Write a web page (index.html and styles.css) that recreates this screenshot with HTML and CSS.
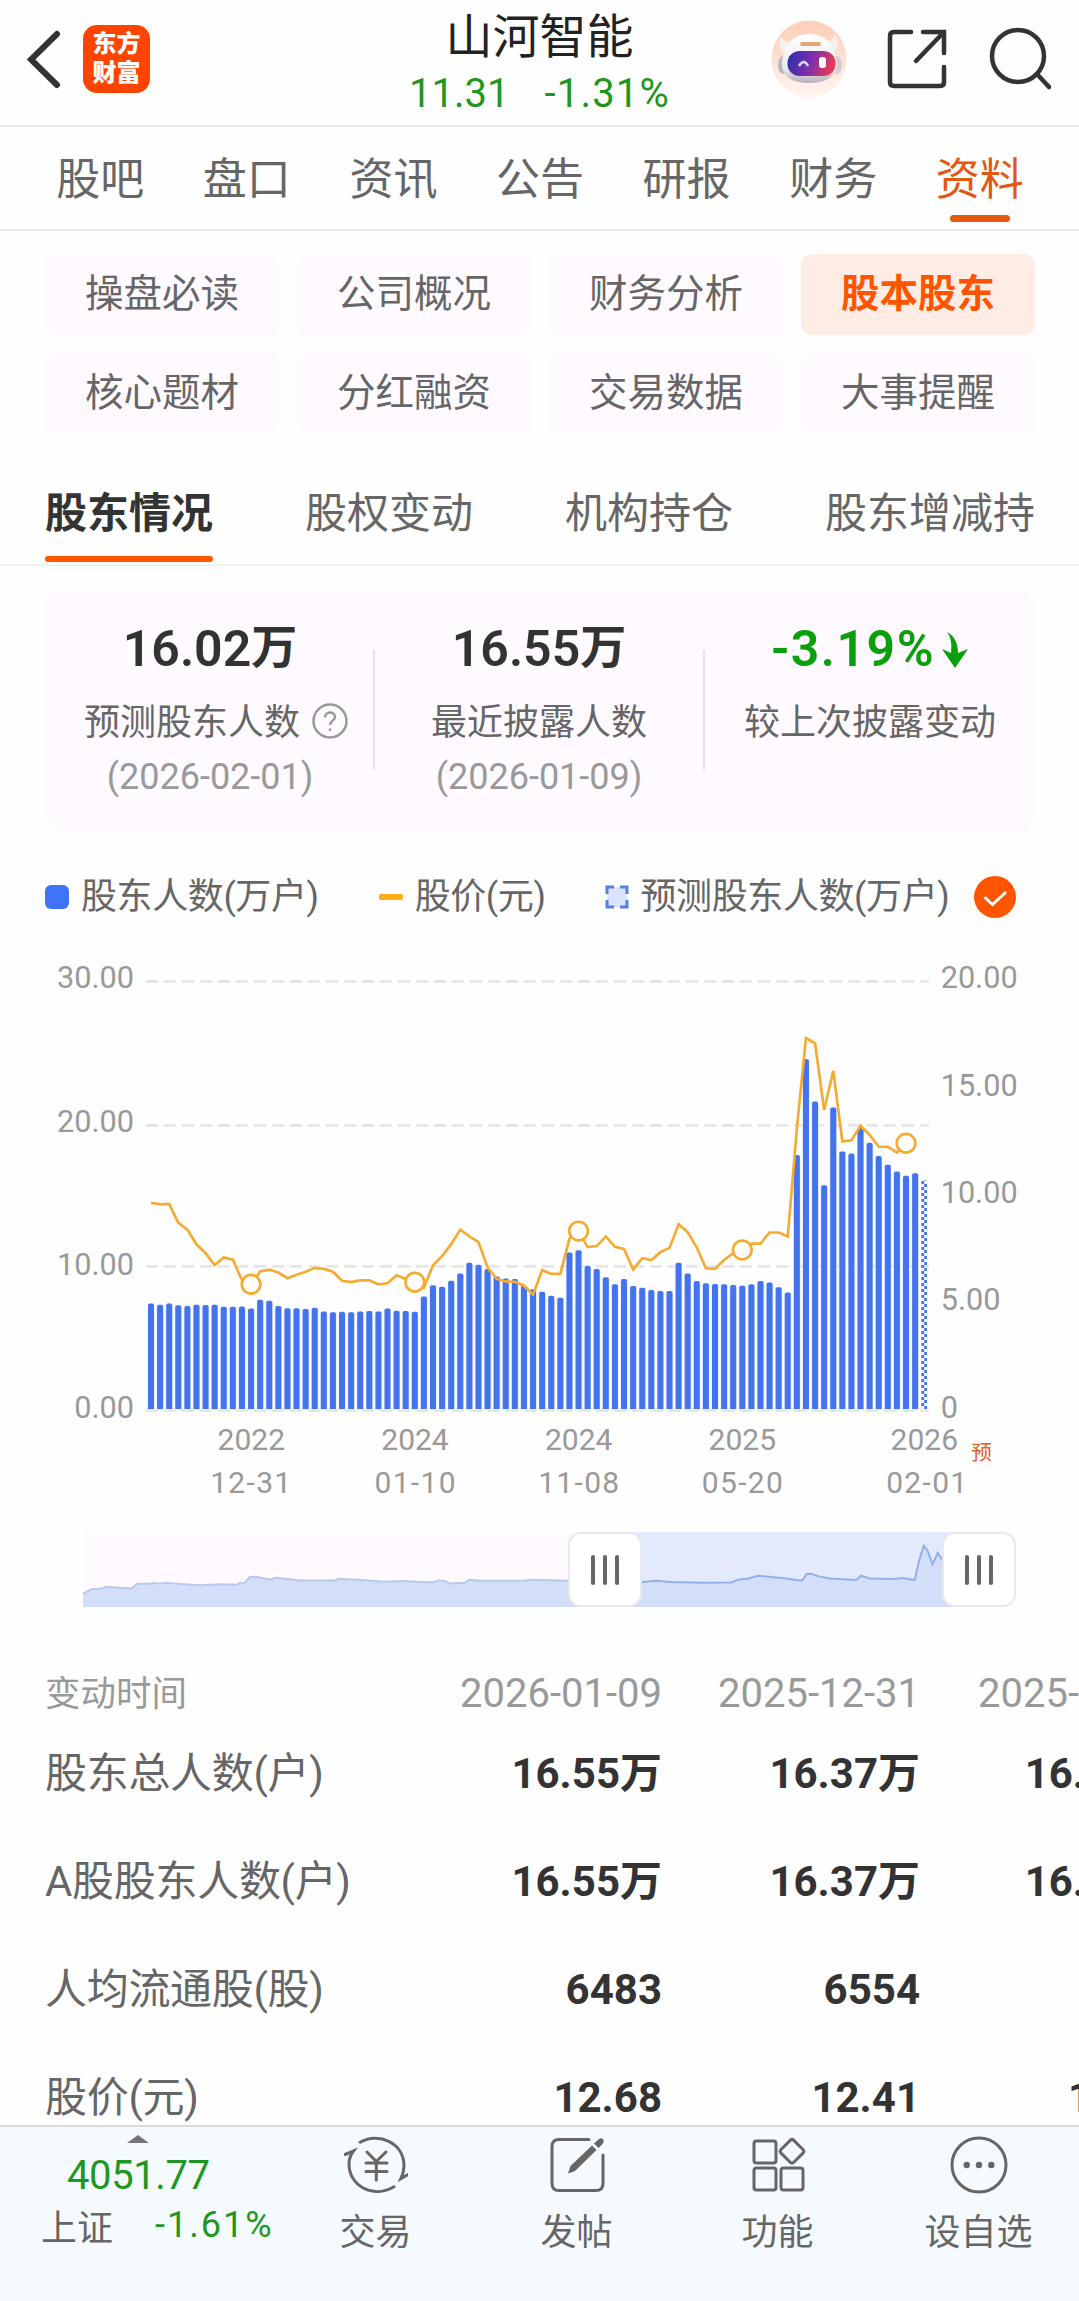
FILE: index.html
```html
<!DOCTYPE html>
<html lang="zh-CN">
<head>
  <meta charset="UTF-8" />
  <meta name="viewport" content="width=device-width, initial-scale=1.0"/>
  <title>山河智能 - 股本股东</title>
  <link rel="stylesheet" href="styles.css">
</head>
<body>
  <header class="header">
    <div class="header-left">
      <svg class="back" viewBox="0 0 36 60"><path d="M32 5L6 30.500L32 56"/></svg>
      <div class="logo">东方<br>财富</div>
    </div>
    <div class="header-title">
      <h1>山河智能</h1>
      <div class="quote"><span>11.31</span><span class="rate">-1.31%</span></div>
    </div>
    <div class="header-right">
      <svg class="robot" viewBox="0 0 76 78">
        <defs>
          <linearGradient id="robotBg" x1="0" y1="0" x2="0" y2="1"><stop offset="0" stop-color="#ffcdb5"/><stop offset="1" stop-color="#fff5f1"/></linearGradient>
          <linearGradient id="robotFace" x1="0" y1="0" x2="1" y2="0.200"><stop offset="0" stop-color="#2a2fa8"/><stop offset="0.550" stop-color="#7b2fae"/><stop offset="1" stop-color="#e23a5c"/></linearGradient>
          <linearGradient id="robotHead" x1="0" y1="0" x2="0" y2="1"><stop offset="0" stop-color="#ffffff"/><stop offset="0.700" stop-color="#eeeaec"/><stop offset="1" stop-color="#b5b2ba"/></linearGradient>
        </defs>
        <ellipse cx="38" cy="39" rx="37.500" ry="38.500" fill="url(#robotBg)"/>
        <path d="M10 17Q6 27 14 33L24 22Q14 23 10 17ZM65 14Q70 26 62 33L52 21Q63 21 65 14Z" fill="#f6efef"/>
        <ellipse cx="12" cy="45" rx="5" ry="9" fill="#b9b7c0"/>
        <ellipse cx="66" cy="45" rx="5" ry="9" fill="#d5cdd2"/>
        <path d="M38 14C54 14 64 25 66 44C66 58 52 63 38 63C23 63 11 58 11 44C12 25 22 14 38 14Z" fill="url(#robotHead)"/>
        <rect x="29" y="22" width="21" height="4" rx="2" fill="#dfa878"/>
        <rect x="16.500" y="31" width="48" height="25" rx="12" fill="url(#robotFace)"/>
        <path d="M28 46Q33 38 37 46" fill="none" stroke="#dcd8ff" stroke-width="2.500"/>
        <rect x="48" y="37" width="7" height="11" rx="3" fill="#fff"/>
      </svg>
      <svg class="share" viewBox="0 0 60 60"><path d="M24 3H7Q3 3 3 7V53Q3 57 7 57H53Q57 57 57 53V38M36 3H57V24M56 4L29 32"/></svg>
      <svg class="search" viewBox="0 0 64 64"><circle cx="29" cy="29" r="26"/><path d="M48 47L60 60"/></svg>
    </div>
  </header>

  <nav class="tabs">
    <span>股吧</span><span>盘口</span><span>资讯</span><span>公告</span><span>研报</span><span>财务</span><span class="active">资料</span>
  </nav>

  <div class="menu">
    <span>操盘必读</span><span>公司概况</span><span>财务分析</span><span class="active">股本股东</span>
    <span>核心题材</span><span>分红融资</span><span>交易数据</span><span>大事提醒</span>
  </div>

  <nav class="subtabs">
    <span class="active">股东情况</span><span>股权变动</span><span>机构持仓</span><span>股东增减持</span>
  </nav>

  <section class="summary">
    <div class="summary-item">
      <div class="num">16.02<b>万</b></div>
      <div class="label with-help">预测股东人数
        <svg class="help" viewBox="0 0 36 36"><circle cx="18" cy="18" r="16.500"/><path d="M13 14.500C13 8 23 8 23 14C23 18 18 17.500 18 22M18 25.500V28"/></svg>
      </div>
      <div class="date">(2026-02-01)</div>
    </div>
    <div class="summary-item">
      <div class="num">16.55<b>万</b></div>
      <div class="label">最近披露人数</div>
      <div class="date">(2026-01-09)</div>
    </div>
    <div class="summary-item">
      <div class="num down">-3.19%
        <svg class="arrow" viewBox="0 0 28 38"><path d="M6 1C14 5 17 13 17 22L27 18L14 37L1 18L10 22C11 13 10 6 6 1Z"/></svg>
      </div>
      <div class="label">较上次披露变动</div>
    </div>
  </section>

  <div class="legend">
    <i class="mark-bar"></i><span>股东人数(万户)</span>
    <i class="mark-line"></i><span>股价(元)</span>
    <svg class="mark-pre" viewBox="0 0 24 24"><rect x="2" y="2" width="20" height="20"/><path d="M9 2H2V9M15 2H22V9M22 15V22H15M9 22H2V15"/></svg><span>预测股东人数(万户)</span>
    <svg class="check" viewBox="0 0 42 42"><circle cx="21" cy="21" r="21"/><path d="M10.500 21L18.500 28.500L32 16"/></svg>
  </div>

  <svg class="chart" viewBox="-120 3 3237 1650">
    <defs>
      <pattern id="checker" width="18" height="18" patternUnits="userSpaceOnUse" x="2643.600">
        <rect x="9" width="9" height="9" fill="#4374ee"/><rect y="9" width="9" height="9" fill="#4374ee"/>
      </pattern>
    </defs>
    <g class="grid">
      <path d="M318 94H2667"/><path d="M318 526H2667"/><path d="M318 949H2667"/><path d="M318 1382H2667"/>
    </g>
    <g id="bars"></g>
    <polyline id="priceLine"/>
    <g id="dots"></g>
    <g class="axis axis-left">
      <text x="282" y="115">30.00</text><text x="282" y="545">20.00</text><text x="282" y="974">10.00</text><text x="282" y="1403">0.00</text>
    </g>
    <g class="axis">
      <text x="2702" y="115">20.00</text><text x="2702" y="439">15.00</text><text x="2702" y="760">10.00</text><text x="2702" y="1081">5.00</text><text x="2702" y="1403">0</text>
    </g>
    <g class="axis axis-x">
      <text x="634" y="1501">2022</text><text class="day" x="634" y="1628">12-31</text>
      <text x="1125" y="1501">2024</text><text class="day" x="1127" y="1628">01-10</text>
      <text x="1616" y="1501">2024</text><text class="day" x="1618" y="1628">11-08</text>
      <text x="2107" y="1501">2025</text><text class="day" x="2109" y="1628">05-20</text>
      <text x="2653" y="1501">2026</text><text class="day" x="2662" y="1628">02-01</text>
    </g>
    <text class="pre-tag" x="2794" y="1530">预</text>
  </svg>

  <div class="slider">
    <svg class="slider-area" viewBox="65 97 1408 223" preserveAspectRatio="none">
      <rect class="range" x="853" y="97" width="565" height="223"/>
      <path class="fill" d="M65 280L78 267L92 266L100 260L138 265L147 251L240 255L297 254L301 249L309 248L317 231L325 230L347 238L357 233L393 241L445 241L451 236L520 245L593 247L601 241L620 250L641 248L648 239L665 242L732 242L738 239L798 242L853 245L910 246L930 242L952 246L1000 248L1043 247L1055 238L1068 236L1084 227L1120 234L1150 242L1157 222L1164 221L1175 229L1192 235L1232 240L1239 227L1252 235L1287 237L1302 234L1320 240L1327 180L1334 137L1340 155L1347 193L1355 159L1362 182L1390 190L1418 200V320H65Z"/>
      <polyline class="line" points="65,280 78,267 92,266 100,260 138,265 147,251 165,251 172,249 180,251 190,249 240,255 275,252 297,254 301,249 309,248 317,231 325,230 347,238 357,233 393,241 445,241 451,236 480,239 520,245 545,243 593,247 601,241 610,243 620,250 641,248 648,239 665,242 732,242 738,239 798,242 853,245"/>
      <polyline class="line strong" points="853,245 910,246 930,242 952,246 1000,248 1043,247 1055,238 1068,236 1084,227 1100,230 1120,234 1150,242 1157,222 1164,221 1175,229 1192,235 1232,240 1239,227 1252,235 1287,237 1302,234 1320,240 1327,180 1334,137 1340,155 1347,193 1355,159 1362,182"/>
    </svg>
    <div class="handle handle-start"><i></i><i></i><i></i></div>
    <div class="handle handle-end"><i></i><i></i><i></i></div>
  </div>

  <section class="table">
    <div class="row head"><span class="name">变动时间</span><span>2026-01-09</span><span>2025-12-31</span><span>2025-</span></div>
    <div class="row"><span class="name">股东总人数(户)</span><span>16.55万</span><span>16.37万</span><span class="cut-short">16.</span></div>
    <div class="row"><span class="name">A股股东人数(户)</span><span>16.55万</span><span>16.37万</span><span class="cut-short">16.</span></div>
    <div class="row"><span class="name">人均流通股(股)</span><span>6483</span><span>6554</span><span></span></div>
    <div class="row"><span class="name">股价(元)</span><span>12.68</span><span>12.41</span><span class="cut">1</span></div>
  </section>

  <footer class="bottom">
    <div class="index">
      <svg class="up" viewBox="0 0 22 8"><path d="M0 8L11 0L22 8Z"/></svg>
      <div class="index-value">4051.77</div>
      <div class="index-row"><span>上证</span><span class="index-rate">-1.61%</span></div>
    </div>
    <div class="action">
      <svg viewBox="0 0 64 64"><path d="M16.200 9.300C34 -1 60 9 60 33Q60 39 57 45.500L64 41.500M50 53.700C29 66 5 53 5 31Q5 24 9.500 18L1 21.500"/><path d="M23 19L32.300 28.500L42 19M32.300 28.500V47M22 30H43M22 38.500H43"/></svg>
      <span>交易</span>
    </div>
    <div class="action">
      <svg viewBox="0 0 64 64"><path d="M44 6.500H14Q7 6.500 7 13.500V50.500Q7 57.500 14 57.500H51Q58 57.500 58 50.500V22"/><path class="solid" d="M23 40.500L25.500 33L47 12.500L51.500 17L30 38ZM49 10.500L54 6Q56 4.500 58 6Q59.500 8 58 10.500L53.500 15Z"/></svg>
      <span>发帖</span>
    </div>
    <div class="action">
      <svg viewBox="0 0 64 64"><rect x="8" y="8" width="22" height="22" rx="2.500"/><rect x="8" y="35" width="22" height="22" rx="2.500"/><rect x="35" y="35" width="22" height="22" rx="2.500"/><rect x="37" y="9.300" width="18" height="18" rx="2.500" transform="rotate(45 46 18.300)"/></svg>
      <span>功能</span>
    </div>
    <div class="action">
      <svg viewBox="0 0 64 64"><circle cx="32" cy="32" r="27"/><g class="solid"><circle cx="19.700" cy="32" r="3.200"/><circle cx="32" cy="32" r="3.200"/><circle cx="44.300" cy="32" r="3.200"/></g></svg>
      <span>设自选</span>
    </div>
  </footer>

<script>
// distance from the top of the chart for each bar and price point
const barTops = [
  990, 993, 990, 995, 997, 993, 994, 993, 999, 999, 998, 1004, 979, 982, 997, 1003, 1003, 1005, 1002, 1012,
  1014, 1013, 1014, 1012, 1011, 1012, 1004, 1010, 1011, 1013, 970, 939, 943, 926, 906, 876, 881, 893, 914, 920,
  921, 940, 950, 957, 968, 974, 847, 841, 885, 893, 916, 936, 921, 941, 946, 952, 955, 955, 876, 906,
  927, 933, 935, 936, 938, 940, 936, 927, 931, 944, 959, 574, 306, 424, 659, 441, 564, 570, 498, 540,
  577, 601, 620, 632, 625, 645
];
const prices = [
  708, 712, 711, 764, 783, 824, 849, 882, 861, 867, 925, 936, 900, 895, 903, 919, 909, 901, 890, 893,
  901, 926, 930, 925, 925, 936, 933, 911, 921, 930, 945, 883, 857, 823, 783, 802, 818, 889, 921, 928,
  929, 940, 965, 896, 907, 907, 808, 787, 832, 829, 802, 831, 837, 895, 863, 868, 846, 834, 768, 790,
  833, 891, 893, 868, 849, 840, 822, 822, 791, 791, 802, 500, 247, 261, 448, 338, 536, 533, 492, 518,
  551, 551, 567, 541
];
const marked = [11, 29, 47, 65, 83];
const baseY = 1377;
const px = i => 333 + i * 27.29;
const py = v => v * 15 / 14;

document.getElementById("bars").innerHTML = barTops.map((v, i) => {
  const x = px(i);
  const y = py(v);
  const last = i === barTops.length - 1;
  const halo = last ? "" : `<rect x="${x - 11}" y="${y}" width="22" height="${baseY - y + 4}" fill="#e4ecfd"/>`;
  return halo +
    `<path d="M${x - 9} ${baseY}V${y + 6}q0 -6 6 -6h6q6 0 6 6V${baseY}Z" fill="${last ? "url(#checker)" : "#4374ee"}"/>`;
}).join("");

document.getElementById("priceLine").setAttribute("points", prices.map((v, i) => `${px(i)},${py(v)}`).join(" "));
document.getElementById("dots").innerHTML = marked.map(i => `<circle cx="${px(i)}" cy="${py(prices[i])}" r="28"/>`).join("");
</script>
</body>
</html>
```

FILE: styles.css
```css
* {
  box-sizing: border-box;
}

body {
  margin: 0;
  width: 1079px;
  height: 2301px;
  overflow: hidden;
  display: flex;
  flex-direction: column;
  background: #fefefe;
  color: #666;
  font-family: Roboto, "Noto Sans CJK SC", sans-serif;
}

svg {
  display: block;
  flex: none;
}

/* header */
.header {
  height: 127px;
  flex: none;
  display: grid;
  grid-template-columns: 1fr auto 1fr;
  border-bottom: 2px solid #eaeaea;
}

.header-left,
.header-right {
  display: flex;
  align-items: center;
  height: 118px;
}

.header-left {
  padding-left: 25px;
}

.back {
  width: 36px;
  height: 60px;
  fill: none;
  stroke: #333;
  stroke-width: 6;
  stroke-linecap: round;
}

.logo {
  margin-left: 22px;
  width: 67px;
  height: 68px;
  padding-top: 5px;
  border-radius: 14px;
  background: #ff4400;
  color: #fff;
  font-size: 24px;
  line-height: 29px;
  font-weight: 900;
  text-align: center;
}

.header-title {
  padding-top: 2px;
  text-align: center;
}

h1 {
  margin: 0;
  font-size: 47px;
  line-height: 70px;
  font-weight: 400;
  color: #222;
}

.quote {
  display: flex;
  justify-content: center;
  gap: 35px;
  font-size: 40px;
  line-height: 43px;
  color: #1f961f;
}

.quote .rate {
  letter-spacing: 1.2px;
}

.header-right {
  justify-content: flex-end;
  padding-right: 26px;
}

.robot {
  width: 76px;
  height: 78px;
}

.share {
  width: 60px;
  height: 60px;
  margin: 0 42px 0 40px;
}

.search {
  width: 64px;
  height: 64px;
}

.share,
.search {
  fill: none;
  stroke: #333;
  stroke-width: 4.5;
  stroke-linecap: round;
}

/* tabs */
.tabs {
  height: 104px;
  flex: none;
  display: flex;
  padding: 0 26px 0 27px;
  border-bottom: 2px solid #eaeaea;
  font-size: 44px;
  line-height: 106px;
}

.tabs span {
  flex: 1;
  text-align: center;
}

.tabs .active {
  color: #e5560f;
  display: flex;
  flex-direction: column;
  align-items: center;
}

.tabs .active::after {
  content: "";
  width: 60px;
  height: 7px;
  margin-top: -18px;
  border-radius: 4px;
  background: #e5560f;
}

.menu {
  display: grid;
  flex: none;
  grid-template-columns: repeat(4, 1fr);
  gap: 18px;
  padding: 23px 44px 0 45px;
  font-size: 38.5px;
  line-height: 80px;
  text-align: center;
}

.menu span {
  height: 81px;
  border-radius: 11px;
  background: #fefaff;
}

.menu .active {
  background: #ffede5;
  color: #ff5500;
  font-weight: 700;
}

.subtabs {
  height: 132px;
  flex: none;
  display: flex;
  justify-content: space-between;
  padding: 34px 44px 1px 45px;
  border-bottom: 2px solid #f0f0f0;
  font-size: 42px;
  line-height: 92px;
}

.subtabs .active {
  position: relative;
  color: #333;
  font-weight: 700;
}

.subtabs .active::after {
  content: "";
  position: absolute;
  left: 0;
  right: 0;
  bottom: 1px;
  height: 6px;
  border-radius: 3px;
  background: #ff5500;
}

/* summary card */
.summary {
  height: 246px;
  flex: none;
  margin: 22px 44px 0 45px;
  display: grid;
  grid-template-columns: 328px 330px 1fr;
  border-radius: 24px;
  background: #fefaff;
  text-align: center;
}

.summary-item {
  padding: 33px 0 0 2px;
}

.summary-item + .summary-item {
  background: linear-gradient(#e6e4e8, #e6e4e8) 0 62px / 2px 120px no-repeat;
}

.num {
  display: flex;
  justify-content: center;
  align-items: center;
  height: 57px;
  font-size: 50px;
  line-height: 57px;
  font-weight: 600;
  color: #333;
}

.num b {
  height: 61px;
  font-size: 46px;
  font-weight: 700;
}

.num.down {
  letter-spacing: 1.5px;
  color: #0aa00a;
}

.arrow {
  width: 28px;
  height: 38px;
  margin-left: 6px;
  fill: #0aa00a;
}

.label {
  display: flex;
  justify-content: center;
  align-items: center;
  height: 60px;
  margin-top: 11px;
  font-size: 36px;
}

.with-help {
  padding-left: 12px;
}

.help {
  width: 36px;
  height: 36px;
  margin: 4px 0 0 12px;
  fill: none;
  stroke: #999;
  stroke-width: 2.5;
}

.date {
  margin-top: 3px;
  font-size: 36px;
  line-height: 50px;
  color: #999;
}

/* chart */
.legend {
  height: 117px;
  flex: none;
  display: flex;
  align-items: center;
  padding: 8px 0 0 45px;
  font-size: 36px;
  letter-spacing: -0.4px;
}

.legend span {
  height: 48px;
  line-height: 48px;
  margin-left: 12px;
}

.mark-bar {
  width: 24px;
  height: 24px;
  border-radius: 6px;
  background: #3f74f6;
}

.mark-line {
  width: 24px;
  height: 6px;
  margin-left: 60px;
  border-radius: 2px;
  background: #ffad14;
}

.mark-pre {
  width: 24px;
  height: 24px;
  margin-left: 59px;
  fill: #dbe2fd;
}

.mark-pre path {
  fill: none;
  stroke: #5b7fe0;
  stroke-width: 3;
}

.check {
  width: 42px;
  height: 42px;
  margin-left: 25px;
  fill: #ff5500;
}

.check path {
  fill: none;
  stroke: #fff;
  stroke-width: 3;
}

.chart {
  width: 1079px;
  height: 550px;
}

.grid path {
  stroke: #e6e6e6;
  stroke-width: 8;
  stroke-dasharray: 36 18;
}

#priceLine,
#dots {
  fill: none;
  stroke: #f5ab32;
  stroke-width: 8;
}

#dots circle {
  fill: #fff;
}

.axis {
  font-size: 92px;
  fill: #999;
}

.axis-left {
  text-anchor: end;
}

.axis-x {
  font-size: 90px;
  text-anchor: middle;
}

.axis-x .day {
  letter-spacing: 4px;
}

.pre-tag {
  font-size: 62px;
  fill: #d9622b;
}

/* range slider */
.slider {
  position: relative;
  width: 933px;
  height: 75px;
  flex: none;
  margin: 31px 0 0 83px;
}

.slider-area {
  width: 933px;
  height: 75px;
  background: linear-gradient(90deg, #fefaff 900px, transparent 900px);
}

.range {
  fill: #e4eafe;
}

.fill {
  fill: #d3def9;
}

.line {
  fill: none;
  stroke: #b8c9ea;
  stroke-width: 2;
  vector-effect: non-scaling-stroke;
}

.line.strong {
  stroke: #93b0ec;
}

.handle {
  position: absolute;
  top: 0;
  width: 74px;
  height: 75px;
  display: flex;
  justify-content: center;
  align-items: center;
  gap: 8px;
  border: 2px solid #e9e9ec;
  border-radius: 13px;
  background: #fff;
}

.handle i {
  width: 4px;
  height: 30px;
  border-radius: 2px;
  background: #666;
}

.handle-start {
  left: 485px;
}

.handle-end {
  right: 0;
}

/* table */
.table {
  flex: 1;
  min-height: 0;
  overflow: hidden;
  padding-top: 60px;
}

.row {
  height: 108px;
  display: grid;
  grid-template-columns: 405px 257px 258px 159px;
  font-size: 42px;
  line-height: 105px;
  font-weight: 700;
  color: #333;
  text-align: right;
}

.row .name {
  padding-left: 45px;
  text-align: left;
  font-weight: 400;
  letter-spacing: -0.3px;
  color: #666;
}

.row.head {
  height: 54px;
  font-size: 40px;
  line-height: 54px;
  font-weight: 400;
  color: #999;
}

.head .name {
  font-size: 35.5px;
  line-height: 54px;
  letter-spacing: 0;
  color: #999;
}

.cut-short {
  margin-right: -6px;
}

.cut {
  margin-right: -13px;
}

/* bottom bar */
.bottom {
  height: 176px;
  flex: none;
  display: flex;
  border-top: 2px solid #d8dade;
  background: #f5faff;
}

.index {
  width: 275px;
  padding-top: 8px;
}

.up {
  width: 22px;
  height: 8px;
  margin-left: 127px;
  fill: #74757c;
}

.index-value {
  margin-top: 9px;
  padding-left: 67px;
  font-size: 40px;
  line-height: 48px;
  letter-spacing: -0.4px;
  color: #1f961f;
}

.index-row {
  display: flex;
  align-items: center;
  height: 50px;
  padding-left: 41px;
  font-size: 36px;
}

.index-rate {
  margin-left: 42px;
  letter-spacing: 2px;
  color: #1f961f;
}

.action {
  flex: 1;
  display: flex;
  flex-direction: column;
  align-items: center;
  padding-top: 6px;
  font-size: 36px;
  line-height: 52px;
}

.action svg {
  width: 64px;
  height: 64px;
  margin-bottom: 10px;
  fill: none;
  stroke: #666;
  stroke-width: 3;
  stroke-linecap: round;
}

.action .solid {
  fill: #666;
  stroke: none;
}
```
